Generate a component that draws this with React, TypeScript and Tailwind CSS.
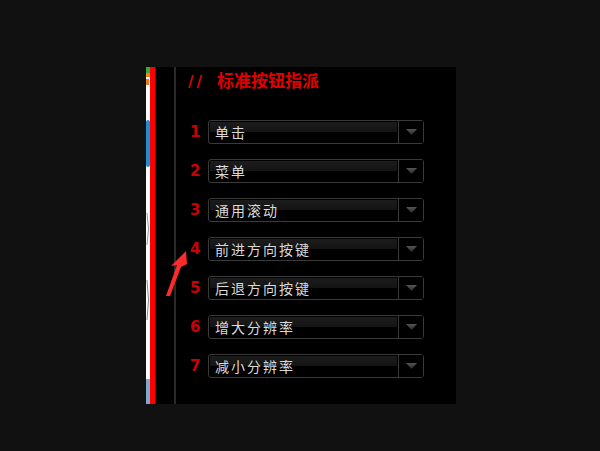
import React from "react";

const items = ["单击", "菜单", "通用滚动", "前进方向按键", "后退方向按键", "增大分辨率", "减小分辨率"];

function Row({ n, label }: { n: number; label: string }) {
  return (
    <div className="flex items-center h-[24px]">
      <div
        className="w-[20px] pl-[2px] text-[15px] font-bold text-[#cc0000] leading-none"
        style={{ fontFamily: '"DejaVu Sans", sans-serif' }}
      >
        {n}
      </div>
      <div className="w-[216px] h-[24px] border border-[#3a3a3a] rounded-[3px] flex bg-black">
        <div className="flex-1 relative m-[1px] overflow-hidden">
          <div className="h-[10px] bg-gradient-to-b from-[#1c1c1c] to-[#141414]" />
          <div
            className="absolute left-[5px] top-0 h-full flex items-center text-[14px] tracking-[2px] text-[#dadada]"
            style={{ fontFamily: '"Noto Sans CJK SC", "DejaVu Sans", sans-serif' }}
          >
            {label}
          </div>
        </div>
        <div className="w-[25px] border-l border-[#3a3a3a] flex items-center justify-center bg-black">
          <svg width="11" height="6" viewBox="0 0 11 6">
            <defs>
              <linearGradient id={`g${n}`} x1="0" y1="0" x2="0" y2="1">
                <stop offset="0" stopColor="#555555" />
                <stop offset="1" stopColor="#2a2a2a" />
              </linearGradient>
            </defs>
            <polygon points="0,0 11,0 5.5,6" fill={`url(#g${n})`} />
          </svg>
        </div>
      </div>
    </div>
  );
}

export default function App() {
  return (
    <div className="w-[600px] h-[451px] bg-[#111111] pt-[67px] pl-[146px] relative overflow-hidden">
      <div className="w-[310px] h-[337px] bg-black flex">
        <div className="w-[4px] h-full bg-white">
          <svg width="4" height="337" viewBox="0 0 4 337">
            <rect x="0" y="0" width="4" height="6" fill="#3aa83a" />
            <rect x="0" y="6" width="4" height="4" fill="#f08020" />
            <rect x="0" y="12" width="3" height="6" fill="#f07a20" />
            <rect x="0" y="53" width="4" height="47" rx="2" fill="#1a8fd8" />
            <path d="M1 146 Q4 162 1 178" stroke="#999" strokeWidth="1" fill="none" />
            <path d="M1 213 Q4 233 1 253" stroke="#888" strokeWidth="1" fill="none" />
            <rect x="0" y="312" width="4" height="25" fill="#7ea8d0" />
          </svg>
        </div>
        <div className="w-[5px] h-full bg-[#ff0000]" />
        <div className="w-[1px] h-full bg-[#7a0000]" />
        <div className="w-[18px] h-full" />
        <div className="w-[2px] h-full bg-[#2a2a2a]" />
        <div className="flex-1 flex flex-col pl-[12px]">
          <div
            className="h-[53px] pt-[3px] text-[17px] font-bold text-[#e00000] leading-[20px]"
            style={{ fontFamily: '"Noto Sans CJK SC", "DejaVu Sans", sans-serif' }}
          >
            <span style={{ fontFamily: '"DejaVu Sans", sans-serif' }} className="text-[15px] tracking-[3px]">//</span>
            <span className="ml-[12px]">标准按钮指派</span>
          </div>
          <div className="flex flex-col gap-[15px]">
            {items.map((t, i) => (
              <Row key={i} n={i + 1} label={t} />
            ))}
          </div>
        </div>
      </div>
      <svg className="absolute left-0 top-0" width="600" height="451" viewBox="0 0 600 451">
        <polygon
          points="186,251 171,266 177,265 166,296 170,296 181,267 187,264"
          fill="#ff2a2a"
        />
      </svg>
    </div>
  );
}
